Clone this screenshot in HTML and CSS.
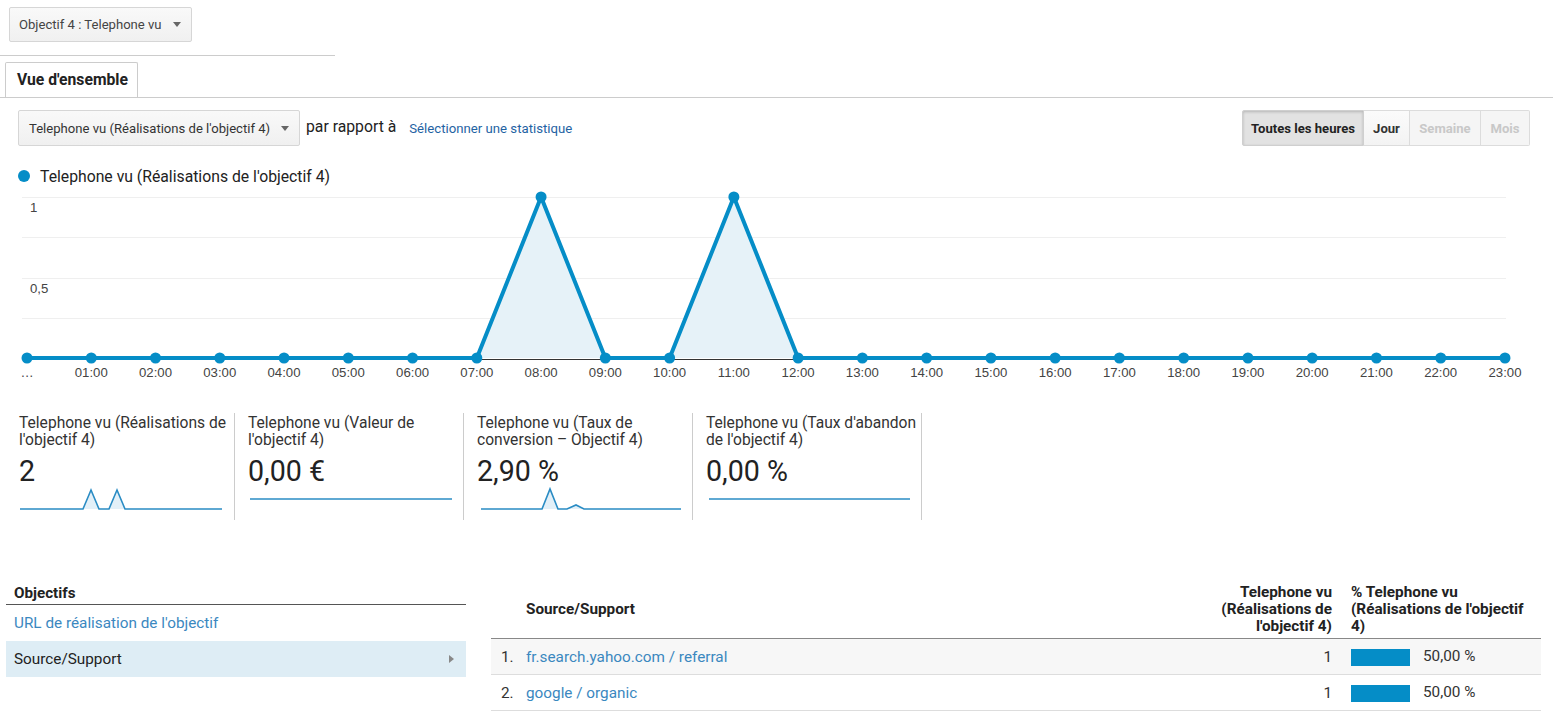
FILE: index.html
```html
<!DOCTYPE html>
<html lang="fr">
<head>
<meta charset="utf-8">
<title>Objectif 4 : Telephone vu</title>
<link rel="stylesheet" href="styles.css">
</head>
<body>
<div class="goal-select">
  <span>Objectif 4 : Telephone vu</span>
  <span class="caret"></span>
</div>
<div class="top-rule"></div>
<div class="tabbar">
  <div class="tab">Vue d'ensemble</div>
</div>

<div class="controls">
  <div class="left-controls">
    <div class="metric-select">
      <span>Telephone vu (Réalisations de l'objectif 4)</span>
      <span class="caret"></span>
    </div>
    <span class="vs">par rapport à</span>
    <a class="stat-link">Sélectionner une statistique</a>
  </div>
  <div class="btn-group">
    <div class="btn active">Toutes les heures</div>
    <div class="btn">Jour</div>
    <div class="btn disabled">Semaine</div>
    <div class="btn disabled">Mois</div>
  </div>
</div>

<div class="legend"><span class="dot"></span>Telephone vu (Réalisations de l'objectif 4)</div>

<svg class="chart" width="1553" height="194" viewBox="0 188 1553 194">
  <g stroke="#efefef" stroke-width="1">
    <line x1="22" y1="197.5" x2="1506" y2="197.5"/>
    <line x1="22" y1="237.5" x2="1506" y2="237.5"/>
    <line x1="22" y1="278.5" x2="1506" y2="278.5"/>
    <line x1="22" y1="318.5" x2="1506" y2="318.5"/>
  </g>
  <g class="ylab">
    <text x="30" y="212">1</text>
    <text x="30" y="293">0,5</text>
  </g>
  <polygon points="476.82,358 541.08,197 605.34,358" fill="#e6f2f8"/>
  <polygon points="669.6,358 733.86,197 798.12,358" fill="#e6f2f8"/>
  <line x1="22" y1="359.5" x2="1506" y2="359.5" stroke="#333" stroke-width="1"/>
  <polyline fill="none" stroke="#058dc7" stroke-width="4" stroke-linejoin="round"
    points="27,358 91.26,358 155.52,358 219.78,358 284.04,358 348.3,358 412.56,358 476.82,358 541.08,197 605.34,358 669.6,358 733.86,197 798.12,358 862.38,358 926.64,358 990.9,358 1055.16,358 1119.42,358 1183.68,358 1247.94,358 1312.2,358 1376.46,358 1440.72,358 1504.98,358"/>
  <g fill="#058dc7">
    <circle cx="27" cy="358" r="5.5"/>
    <circle cx="91.26" cy="358" r="5.5"/>
    <circle cx="155.52" cy="358" r="5.5"/>
    <circle cx="219.78" cy="358" r="5.5"/>
    <circle cx="284.04" cy="358" r="5.5"/>
    <circle cx="348.3" cy="358" r="5.5"/>
    <circle cx="412.56" cy="358" r="5.5"/>
    <circle cx="476.82" cy="358" r="5.5"/>
    <circle cx="541.08" cy="197" r="5.5"/>
    <circle cx="605.34" cy="358" r="5.5"/>
    <circle cx="669.6" cy="358" r="5.5"/>
    <circle cx="733.86" cy="197" r="5.5"/>
    <circle cx="798.12" cy="358" r="5.5"/>
    <circle cx="862.38" cy="358" r="5.5"/>
    <circle cx="926.64" cy="358" r="5.5"/>
    <circle cx="990.9" cy="358" r="5.5"/>
    <circle cx="1055.16" cy="358" r="5.5"/>
    <circle cx="1119.42" cy="358" r="5.5"/>
    <circle cx="1183.68" cy="358" r="5.5"/>
    <circle cx="1247.94" cy="358" r="5.5"/>
    <circle cx="1312.2" cy="358" r="5.5"/>
    <circle cx="1376.46" cy="358" r="5.5"/>
    <circle cx="1440.72" cy="358" r="5.5"/>
    <circle cx="1504.98" cy="358" r="5.5"/>
  </g>
  <g class="xlab" text-anchor="middle">
    <text x="27" y="377">…</text>
    <text x="91.26" y="377">01:00</text>
    <text x="155.52" y="377">02:00</text>
    <text x="219.78" y="377">03:00</text>
    <text x="284.04" y="377">04:00</text>
    <text x="348.3" y="377">05:00</text>
    <text x="412.56" y="377">06:00</text>
    <text x="476.82" y="377">07:00</text>
    <text x="541.08" y="377">08:00</text>
    <text x="605.34" y="377">09:00</text>
    <text x="669.6" y="377">10:00</text>
    <text x="733.86" y="377">11:00</text>
    <text x="798.12" y="377">12:00</text>
    <text x="862.38" y="377">13:00</text>
    <text x="926.64" y="377">14:00</text>
    <text x="990.9" y="377">15:00</text>
    <text x="1055.16" y="377">16:00</text>
    <text x="1119.42" y="377">17:00</text>
    <text x="1183.68" y="377">18:00</text>
    <text x="1247.94" y="377">19:00</text>
    <text x="1312.2" y="377">20:00</text>
    <text x="1376.46" y="377">21:00</text>
    <text x="1440.72" y="377">22:00</text>
    <text x="1504.98" y="377">23:00</text>
  </g>
</svg>

<div class="cards">
  <div class="card">
    <div class="card-title">Telephone vu (Réalisations de l'objectif 4)</div>
    <div class="card-value">2</div>
    <svg class="spark" width="205" height="26" viewBox="0 0 205 26">
      <path d="M64,23 L72,4 L80,23 Z M90,23 L98,4 L106,23 Z" fill="#e3f0f8"/>
      <polyline points="1,23 64,23 72,4 80,23 90,23 98,4 106,23 203,23" fill="none" stroke="#2a8cc4" stroke-width="1.6"/>
    </svg>
  </div>
  <div class="card">
    <div class="card-title">Telephone vu (Valeur de l'objectif 4)</div>
    <div class="card-value">0,00 €</div>
    <svg class="spark" width="205" height="26" viewBox="0 0 205 26">
      <polyline points="2,13 204,13" fill="none" stroke="#2a8cc4" stroke-width="1.6"/>
    </svg>
  </div>
  <div class="card">
    <div class="card-title">Telephone vu (Taux de conversion – Objectif 4)</div>
    <div class="card-value">2,90 %</div>
    <svg class="spark" width="205" height="26" viewBox="0 0 205 26">
      <path d="M65,23 L73,3 L81,23 Z M90,23 L99,19 L107,23 Z" fill="#e3f0f8"/>
      <polyline points="4,23 65,23 73,3 81,23 90,23 99,19 107,23 204,23" fill="none" stroke="#2a8cc4" stroke-width="1.6"/>
    </svg>
  </div>
  <div class="card">
    <div class="card-title">Telephone vu (Taux d'abandon de l'objectif 4)</div>
    <div class="card-value">0,00 %</div>
    <svg class="spark" width="205" height="26" viewBox="0 0 205 26">
      <polyline points="3,13 204,13" fill="none" stroke="#2a8cc4" stroke-width="1.6"/>
    </svg>
  </div>
</div>

<div class="bottom">
  <div class="side">
    <div class="side-head">Objectifs</div>
    <div class="side-item link">URL de réalisation de l'objectif</div>
    <div class="side-item selected">Source/Support<span class="tri"></span></div>
  </div>
  <table class="report">
    <thead>
      <tr>
        <th class="c-idx"></th>
        <th class="c-src">Source/Support</th>
        <th class="c-num">Telephone vu (Réalisations de l'objectif 4)</th>
        <th class="c-pct">% Telephone vu (Réalisations de l'objectif 4)</th>
      </tr>
    </thead>
    <tbody>
      <tr class="odd">
        <td class="c-idx">1.</td>
        <td class="c-src"><a>fr.search.yahoo.com / referral</a></td>
        <td class="c-num">1</td>
        <td class="c-pct"><span class="bar" style="width:59px"></span>50,00 %</td>
      </tr>
      <tr>
        <td class="c-idx">2.</td>
        <td class="c-src"><a>google / organic</a></td>
        <td class="c-num">1</td>
        <td class="c-pct"><span class="bar" style="width:59px"></span>50,00 %</td>
      </tr>
    </tbody>
  </table>
</div>
</body>
</html>
```
FILE: styles.css
```css
* { box-sizing: border-box; }
body {
  margin: 0;
  font-family: Roboto, "Liberation Sans", Arial, sans-serif;
  color: #333;
  background: #fff;
  width: 1553px;
  height: 714px;
  overflow: hidden;
}
a { color: #3b88bf; text-decoration: none; }

.caret {
  width: 0; height: 0;
  border-left: 4px solid transparent;
  border-right: 4px solid transparent;
  border-top: 5px solid #666;
}

.goal-select {
  margin: 7px 0 0 9px;
  width: 183px;
  height: 35px;
  border: 1px solid #d6d6d6;
  border-radius: 2px;
  background: linear-gradient(#f9f9f9, #f0f0f0);
  display: flex;
  align-items: center;
  justify-content: space-between;
  padding: 0 10px 0 9px;
  font-size: 13.1px;
  color: #444;
}
.top-rule {
  margin-top: 13px;
  width: 335px;
  border-top: 1px solid #ccc;
}
.tabbar {
  margin-top: 6px;
  border-bottom: 1px solid #ccc;
  padding-left: 5px;
  display: flex;
}
.tab {
  height: 35px;
  width: 133px;
  border: 1px solid #ccc;
  border-bottom: none;
  border-radius: 2px 2px 0 0;
  background: #fff;
  font-size: 15.7px;
  font-weight: 700;
  color: #222;
  display: flex;
  align-items: center;
  padding-left: 11px;
  padding-bottom: 1px;
}

.controls {
  margin-top: 12px;
  padding: 0 23px 0 18px;
  display: flex;
  justify-content: space-between;
  align-items: center;
  height: 36px;
}
.left-controls { display: flex; align-items: center; }
.metric-select {
  width: 282px;
  height: 36px;
  border: 1px solid #d6d6d6;
  border-radius: 2px;
  background: linear-gradient(#f9f9f9, #f0f0f0);
  display: flex;
  align-items: center;
  justify-content: space-between;
  padding: 0 10px 0 10px;
  font-size: 13.1px;
  color: #333;
}
.vs {
  margin-left: 6px;
  font-size: 15.75px;
  color: #222;
  position: relative;
  top: -2px;
}
.stat-link {
  margin-left: 13px;
  font-size: 13.2px;
  color: #1f63a3;
}
.btn-group {
  display: flex;
  height: 36px;
  border-radius: 2px;
}
.btn {
  height: 36px;
  display: flex;
  align-items: center;
  justify-content: center;
  font-size: 13.1px;
  font-weight: 700;
  color: #333;
  border: 1px solid #dcdcdc;
  border-left: none;
  background: linear-gradient(#fbfbfb, #f3f3f3);
}
.btn:first-child { border-left: 1px solid #d0d0d0; border-radius: 2px 0 0 2px; }
.btn:last-child { border-radius: 0 2px 2px 0; }
.btn:nth-child(1) { width: 122px; }
.btn:nth-child(2) { width: 46px; }
.btn:nth-child(3) { width: 71px; }
.btn:nth-child(4) { width: 49px; }
.btn.active {
  background: #e2e2e2;
  box-shadow: inset 0 1px 3px rgba(0,0,0,0.2);
  color: #222;
  border-color: #cfcfcf;
}
.btn.disabled { color: #c8c8c8; background: #f5f5f5; }

.legend {
  margin-top: 21px;
  padding-left: 18px;
  height: 18px;
  display: flex;
  align-items: center;
  font-size: 15.75px;
  color: #222;
}
.dot {
  width: 12px; height: 12px;
  border-radius: 50%;
  background: #058dc7;
  margin-right: 10px;
}
.chart { display: block; margin-top: 3px; }
.chart text { font-family: "Liberation Sans", Arial, sans-serif; font-size: 13.2px; fill: #444; }

.cards {
  margin-top: 31px;
  padding-left: 19px;
  display: flex;
}
.card {
  width: 216px;
  height: 107px;
  border-right: 1px solid #ccc;
  margin-right: 13px;
}
.card-title {
  font-size: 15.6px;
  line-height: 17px;
  height: 36px;
  padding-top: 2px;
  color: #333;
  padding-right: 4px;
}
.card-value {
  margin-top: 7px;
  font-size: 28.6px;
  line-height: 30px;
  color: #222;
}
.spark { display: block; }

.bottom {
  margin-top: 63px;
  padding-left: 6px;
  display: flex;
  gap: 25px;
  align-items: flex-start;
}
.side { width: 460px; }
.side-head {
  margin-top: 2px;
  font-size: 15.2px;
  font-weight: 700;
  line-height: 17px;
  padding: 0 8px 2px;
  border-bottom: 1px solid #555;
  color: #222;
}
.side-item {
  height: 36px;
  display: flex;
  align-items: center;
  padding: 0 8px;
  font-size: 15.3px;
}
.side-item.link { color: #3b88bf; }
.side-item.selected {
  background: #deedf5;
  color: #222;
  justify-content: space-between;
  padding-right: 12px;
}
.tri {
  width: 0; height: 0;
  border-top: 4px solid transparent;
  border-bottom: 4px solid transparent;
  border-left: 5px solid #888;
}

.report {
  width: 1050px;
  border-collapse: collapse;
  font-size: 15.3px;
}
.report th {
  font-weight: 700;
  color: #222;
  line-height: 17px;
  padding: 1px 8px 3px;
  vertical-align: middle;
  text-align: left;
  border-bottom: 1px solid #888;
}
.report td {
  height: 36px;
  padding: 0 8px;
  border-bottom: 1px solid #ddd;
  color: #333;
}
.report tr.odd td { background: #f7f7f7; }
.report .c-idx { width: 35px; padding: 0 0 0 10px; }
.report th.c-num, .report td.c-num { width: 133px; text-align: right; padding-right: 10px; }
.report th.c-pct, .report td.c-pct { width: 199px; padding-left: 9px; padding-right: 12px; }
.report th.c-src { padding-left: 0; }
.report td.c-src { padding-left: 0; }
.bar {
  display: inline-block;
  height: 17px;
  background: #058dc7;
  vertical-align: middle;
  margin-right: 13px;
}
```
